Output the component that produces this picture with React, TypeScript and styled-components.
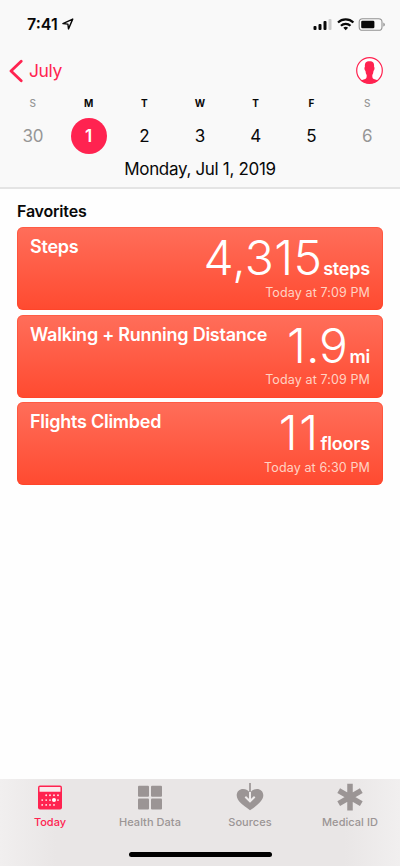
import React from "react";
import styled, { createGlobalStyle } from "styled-components";

const PINK = "#ff2350";

const GlobalStyle = createGlobalStyle`
  *, *::before, *::after { box-sizing: border-box; }
  body { margin: 0; background: #fff; font-family: Inter, "Liberation Sans", sans-serif; color: #080808; }
`;

const Screen = styled.main`
  width: 400px;
  height: 866px;
  display: flex;
  flex-direction: column;
  overflow: hidden;
  background: #fefefe;
`;

const Header = styled.header`
  height: 189px;
  flex: none;
  display: flex;
  flex-direction: column;
  background: #f9f9f9;
  border-bottom: 2px solid #e4e4e4;
`;

const StatusBar = styled.div`
  height: 48px;
  padding: 0 15px 0 27px;
  display: flex;
  align-items: center;
  justify-content: space-between;
`;

const Clock = styled.div`
  display: flex;
  align-items: center;
  gap: 4px;
  font-size: 16px;
  font-weight: 600;
  line-height: 20px;
`;

const StatusIcons = styled.div`
  display: flex;
  align-items: center;
`;

const NavBar = styled.nav`
  height: 46px;
  padding: 0 16px 0 9px;
  display: flex;
  align-items: center;
  justify-content: space-between;
`;

const BackLink = styled.div`
  display: flex;
  align-items: center;
  gap: 6px;
  color: ${PINK};
  font-size: 17.5px;
  line-height: 24px;
  letter-spacing: -0.4px;
`;

const Week = styled.div`
  display: grid;
  grid-template-columns: repeat(7, 1fr);
  padding: 0 5px;
`;

const Day = styled.div<{ $dim: boolean }>`
  display: flex;
  flex-direction: column;
  align-items: center;
  color: ${(p) => (p.$dim ? "#969696" : "#080808")};
`;

const DayLetter = styled.span<{ $dim: boolean }>`
  height: 18px;
  line-height: 18px;
  font-size: 10px;
  font-weight: ${(p) => (p.$dim ? 500 : 700)};
`;

const DayNumber = styled.span<{ $selected: boolean }>`
  width: 36px;
  height: 36px;
  margin-top: 6px;
  border-radius: 50%;
  line-height: 36px;
  text-align: center;
  font-size: 17px;
  font-weight: ${(p) => (p.$selected ? 600 : 400)};
  letter-spacing: -0.2px;
  ${(p) => p.$selected && `background: ${PINK}; color: #fff;`}
`;

const FullDate = styled.div`
  margin-top: 3px;
  text-align: center;
  font-size: 17px;
  line-height: 24px;
  letter-spacing: -0.32px;
`;

const Content = styled.section`
  flex: 1;
  padding: 12px 17px 0;
`;

const SectionTitle = styled.h2`
  margin: 0 0 6px;
  font-size: 16px;
  line-height: 20px;
  font-weight: 600;
  letter-spacing: -0.2px;
`;

const CardList = styled.div`
  display: flex;
  flex-direction: column;
  gap: 4.5px;
`;

const Card = styled.article`
  height: 83px;
  padding: 9px 13px 0;
  border-radius: 6px;
  background: linear-gradient(#ff6e5a, #ff4a30);
  box-shadow: inset 0 0 0 1px rgba(255, 62, 34, 0.4);
  color: #fff;
  display: flex;
  justify-content: space-between;
`;

const CardTitle = styled.h3`
  margin: 0;
  width: 0;
  font-size: 18px;
  line-height: 22px;
  font-weight: 560;
  white-space: nowrap;
  letter-spacing: -0.25px;
`;

const Reading = styled.div`
  display: flex;
  flex-direction: column;
  align-items: flex-end;
`;

const Measure = styled.div`
  display: flex;
  align-items: baseline;
  line-height: 43px;
  height: 45px;
`;

const Value = styled.span<{ $spacing: number; $gap: number }>`
  font-size: 48px;
  font-weight: 290;
  letter-spacing: ${(p) => p.$spacing}px;
  margin-right: ${(p) => p.$gap}px;
`;

const Unit = styled.span`
  font-size: 18px;
  font-weight: 600;
  letter-spacing: -0.2px;
`;

const Stamp = styled.span`
  margin-top: 3.5px;
  font-size: 12.5px;
  line-height: 16px;
  white-space: nowrap;
  color: #ffd3c4;
  letter-spacing: 0.12px;
`;

const Footer = styled.footer`
  height: 87px;
  flex: none;
  display: flex;
  flex-direction: column;
  align-items: center;
  background: linear-gradient(90deg, #f1efef, #e9e6e6 14%, #e9e6e6 86%, #f1efef);
`;

const Tabs = styled.div`
  width: 100%;
  display: grid;
  grid-template-columns: repeat(4, 1fr);
`;

const Tab = styled.div<{ $active: boolean }>`
  display: flex;
  flex-direction: column;
  align-items: center;
  padding-top: 4px;
  color: ${(p) => (p.$active ? PINK : "#9b9595")};
  font-size: 11px;
  font-weight: ${(p) => (p.$active ? 550 : 500)};
  line-height: 14px;
  letter-spacing: ${(p) => (p.$active ? 0 : 0.05)}px;
  svg { margin-bottom: 4px; }
`;

const HomeIndicator = styled.div`
  width: 143px;
  height: 5px;
  margin-top: 23px;
  border-radius: 3px;
  background: #000;
`;

const LocationIcon = () => (
  <svg width="12" height="12" viewBox="0 0 12 12">
    <path d="M.9 5.600 10.700 1.100 6.500 10.900 5.900 6.100Z" fill="none" stroke="#080808" strokeWidth="1.400" strokeLinejoin="round" />
  </svg>
);

const StatusGlyphs = () => (
  <svg width="74" height="16" viewBox="0 0 74 16">
    <g fill="#080808">
      <rect x="2.5" y="10" width="3" height="4" rx="1" />
      <rect x="7.5" y="8" width="3" height="6" rx="1" />
      <rect x="12.5" y="5" width="3" height="9" rx="1" />
      <rect x="17.5" y="3" width="3" height="11" rx="1" fill="#cacaca" />
    </g>
    <g fill="none" stroke="#080808" strokeWidth="2.200">
      <path d="M27 6.500a11.200 11.200 0 0 1 15.400 0" />
      <path d="M29.900 9.700a7 7 0 0 1 9.600 0" />
    </g>
    <path d="M32.300 11.800a3.800 3.800 0 0 1 4.800 0L34.700 14.200Z" fill="#080808" />
    <rect x="48.200" y="2.700" width="22.800" height="11.600" rx="3.400" fill="none" stroke="#929292" strokeWidth="1.100" />
    <rect x="50.200" y="4.800" width="13.200" height="7.400" rx="1.300" fill="#080808" />
    <path d="M72.300 6.400c2.100.8 2.100 3.400 0 4.200Z" fill="#929292" />
  </svg>
);

const BackIcon = () => (
  <svg width="14" height="24" viewBox="0 0 14 24">
    <path d="M12.200 2.200 2 12 12.200 21.800" fill="none" stroke={PINK} strokeWidth="2.800" strokeLinecap="round" strokeLinejoin="round" />
  </svg>
);

const ProfileIcon = () => (
  <svg width="28" height="28" viewBox="0 0 28 28">
    <circle cx="13.500" cy="13.500" r="12.800" fill="#fff" stroke={PINK} strokeWidth="1.200" />
    <path d="M13.500 4.200C9.800 4.200 8.700 5.800 8.900 10c-.8.200-.5 3.400.6 3.900.2 1.900.6 3.100 1.200 4.200 0 2.600-.2 3.500-1.500 4l-4.600 1.500C7 25.500 10 26.600 13.500 26.600s6.500-1.100 8.900-3l-4.600-1.500c-1.300-.5-1.500-1.400-1.500-4 .6-1.100 1-2.300 1.200-4.200 1.100-.5 1.400-3.700.6-3.900.2-4.200-.9-5.800-4.600-5.800Z" fill={PINK} />
  </svg>
);

const calendarDots = [
  [8.2, 9.8], [12, 9.8], [16, 9.8], [20, 9.8],
  [4.2, 14.6], [8.2, 14.6], [12, 14.6], [20, 14.6],
  [4.2, 19.4], [8.2, 19.4], [12, 19.4], [16, 19.4],
];

const CalendarIcon = () => (
  <svg width="28" height="28" viewBox="0 0 28 28">
    <g transform="translate(2 2.500)">
      <rect width="24" height="24" rx="2" fill={PINK} />
      <rect x="1.500" y="1.500" width="21" height="4.700" rx=".5" fill="#f9e9ec" />
      {calendarDots.map(([x, y]) => (
        <circle key={`${x}-${y}`} cx={x} cy={y} r=".95" fill="#ffe4e9" />
      ))}
      <circle cx="16" cy="14.600" r="2" fill="#fff" />
    </g>
  </svg>
);

const GridIcon = () => (
  <svg width="28" height="28" viewBox="0 0 28 28" fill="currentColor">
    <rect x="2" y="2.700" width="11" height="11" rx="1" />
    <rect x="15" y="2.700" width="11" height="11" rx="1" />
    <rect x="2" y="15.500" width="11" height="11" rx="1" />
    <rect x="15" y="15.500" width="11" height="11" rx="1" />
  </svg>
);

const HeartDownIcon = () => (
  <svg width="28" height="28" viewBox="0 0 28 28">
    <path d="M14 27.200C7 22.400.7 18 .7 12.300.7 8.200 3.700 5.900 7 5.900c3 0 5.500 1.500 7 4.100 1.500-2.600 4-4.100 7-4.100 3.300 0 6.300 2.300 6.300 6.400C27.300 18 21 22.400 14 27.200Z" fill="currentColor" />
    <path d="M14 8v10M9.300 13.800l4.700 4.500 4.700-4.500" fill="none" stroke="#eeebeb" strokeWidth="2" />
    <path d="M14 0V9" stroke="currentColor" strokeWidth="1.700" />
  </svg>
);

const AsteriskIcon = () => (
  <svg width="28" height="28" viewBox="0 0 28 28">
    <path d="M14 .8v26.800M2.700 7.700l22.600 13M25.300 7.700l-22.600 13" stroke="currentColor" strokeWidth="5.500" />
  </svg>
);

const days = [
  { letter: "S", number: 30, dim: true },
  { letter: "M", number: 1, selected: true },
  { letter: "T", number: 2 },
  { letter: "W", number: 3 },
  { letter: "T", number: 4 },
  { letter: "F", number: 5 },
  { letter: "S", number: 6, dim: true },
];

const cards = [
  { title: "Steps", value: "4,315", unit: "steps", time: "Today at 7:09 PM", spacing: 0.3, gap: 1 },
  { title: "Walking + Running Distance", value: "1.9", unit: "mi", time: "Today at 7:09 PM", spacing: 0, gap: 1.5 },
  { title: "Flights Climbed", value: "11", unit: "floors", time: "Today at 6:30 PM", spacing: 1.5, gap: 1 },
];

const tabs = [
  { label: "Today", Icon: CalendarIcon, active: true },
  { label: "Health Data", Icon: GridIcon },
  { label: "Sources", Icon: HeartDownIcon },
  { label: "Medical ID", Icon: AsteriskIcon },
];

export default function App() {
  return (
    <>
      <GlobalStyle />
      <Screen>
        <Header>
          <StatusBar>
            <Clock>7:41 <LocationIcon /></Clock>
            <StatusIcons><StatusGlyphs /></StatusIcons>
          </StatusBar>
          <NavBar>
            <BackLink><BackIcon />July</BackLink>
            <ProfileIcon />
          </NavBar>
          <Week>
            {days.map((d) => (
              <Day key={d.number} $dim={!!d.dim}>
                <DayLetter $dim={!!d.dim}>{d.letter}</DayLetter>
                <DayNumber $selected={!!d.selected}>{d.number}</DayNumber>
              </Day>
            ))}
          </Week>
          <FullDate>Monday, Jul 1, 2019</FullDate>
        </Header>
        <Content>
          <SectionTitle>Favorites</SectionTitle>
          <CardList>
            {cards.map((c) => (
              <Card key={c.title}>
                <CardTitle>{c.title}</CardTitle>
                <Reading>
                  <Measure>
                    <Value $spacing={c.spacing} $gap={c.gap}>{c.value}</Value>
                    <Unit>{c.unit}</Unit>
                  </Measure>
                  <Stamp>{c.time}</Stamp>
                </Reading>
              </Card>
            ))}
          </CardList>
        </Content>
        <Footer>
          <Tabs>
            {tabs.map(({ label, Icon, active }) => (
              <Tab key={label} $active={!!active}><Icon />{label}</Tab>
            ))}
          </Tabs>
          <HomeIndicator />
        </Footer>
      </Screen>
    </>
  );
}
